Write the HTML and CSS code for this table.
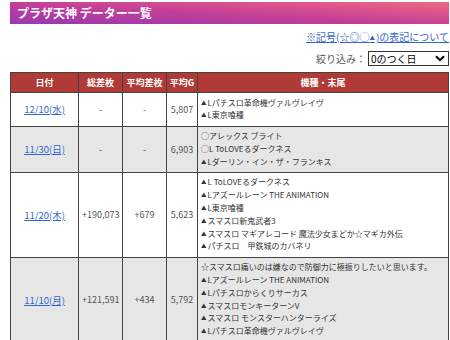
FILE: index.html
```html
<!DOCTYPE html>
<html lang="ja">
<head>
<meta charset="utf-8">
<link rel="stylesheet" href="styles.css">
</head>
<body>
<div class="page">
  <h1 class="title">プラザ天神 データー一覧</h1>
  <div class="note"><a href="#">※記号(☆◎◯<span class="tri">▲</span>)の表記について</a></div>
  <div class="filter">
    <span class="filter-label">絞り込み：</span>
    <div class="select-wrap">
      <select class="filter-select"><option>0のつく日</option></select>
      <svg class="chev" width="10" height="7" viewBox="0 0 10 7"><path d="M1 1.2 L5 5.2 L9 1.2" fill="none" stroke="#000" stroke-width="2"/></svg>
    </div>
  </div>
  <table class="data">
    <colgroup>
      <col class="c-date"><col class="c-total"><col class="c-avg"><col class="c-g"><col class="c-model">
    </colgroup>
    <thead>
      <tr><th>日付</th><th>総差枚</th><th>平均差枚</th><th>平均G</th><th>機種・末尾</th></tr>
    </thead>
    <tbody>
      <tr>
        <td class="date"><a href="#">12/10(水)</a></td>
        <td class="num">-</td><td class="num">-</td><td class="num">5,807</td>
        <td class="models"><div><span class="tri">▲</span>Lパチスロ革命機ヴァルヴレイヴ</div><div><span class="tri">▲</span>L東京喰種</div></td>
      </tr>
      <tr class="alt">
        <td class="date"><a href="#">11/30(日)</a></td>
        <td class="num">-</td><td class="num">-</td><td class="num">6,903</td>
        <td class="models"><div>◯アレックス ブライト</div><div>◯L ToLOVEるダークネス</div><div><span class="tri">▲</span>Lダーリン・イン・ザ・フランキス</div></td>
      </tr>
      <tr>
        <td class="date"><a href="#">11/20(木)</a></td>
        <td class="num">+190,073</td><td class="num">+679</td><td class="num">5,623</td>
        <td class="models"><div><span class="tri">▲</span>L ToLOVEるダークネス</div><div><span class="tri">▲</span>Lアズールレーン THE ANIMATION</div><div><span class="tri">▲</span>L東京喰種</div><div><span class="tri">▲</span>スマスロ新鬼武者3</div><div><span class="tri">▲</span>スマスロ マギアレコード 魔法少女まどか☆マギカ外伝</div><div><span class="tri">▲</span>パチスロ　甲鉄城のカバネリ</div></td>
      </tr>
      <tr class="alt">
        <td class="date"><a href="#">11/10(月)</a></td>
        <td class="num">+121,591</td><td class="num">+434</td><td class="num">5,792</td>
        <td class="models"><div>☆スマスロ痛いのは嫌なので防御力に極振りしたいと思います。</div><div><span class="tri">▲</span>Lアズールレーン THE ANIMATION</div><div><span class="tri">▲</span>Lパチスロからくりサーカス</div><div><span class="tri">▲</span>スマスロモンキーターンV</div><div><span class="tri">▲</span>スマスロ モンスターハンターライズ</div><div><span class="tri">▲</span>Lパチスロ革命機ヴァルヴレイヴ</div></td>
      </tr>
    </tbody>
  </table>
</div>
</body>
</html>
```
FILE: styles.css
```css
html, body {
  margin: 0;
  padding: 0;
  background: #ffffff;
}
body {
  font-family: "Noto Sans CJK JP", "Noto Sans", sans-serif;
  color: #333333;
}
.page {
  width: 439px;
  padding: 2px 0 0 10px;
}
.title {
  margin: 0;
  height: 22px;
  line-height: 22px;
  padding-left: 7px;
  font-size: 12px;
  font-weight: bold;
  color: #ffffff;
  background: linear-gradient(to top right, #9838b2 0%, #c23e98 45%, #e0588a 80%, #ec6c7c 100%);
}
.tri {
  font-size: 5.5px;
  vertical-align: 1px;
  margin-right: 1px;
}
.note {
  margin-top: 6px;
  text-align: right;
  font-size: 10px;
  line-height: 14px;
}
.note a {
  color: #3366cc;
}
.filter {
  margin-top: 6px;
  display: flex;
  justify-content: flex-end;
  align-items: center;
  gap: 2px;
  height: 15px;
}
.filter-label {
  font-size: 10px;
  line-height: 15px;
  color: #555555;
}
.select-wrap {
  position: relative;
  width: 81px;
  height: 15px;
}
.filter-select {
  appearance: none;
  -webkit-appearance: none;
  display: block;
  box-sizing: border-box;
  margin: 0;
  width: 81px;
  height: 15px;
  font-family: inherit;
  font-size: 10px;
  line-height: 13px;
  padding: 0 2px;
  border: 1px solid #333333;
  border-radius: 0;
  background: #ffffff;
  color: #000000;
}
.chev {
  position: absolute;
  z-index: 1;
  right: 4px;
  top: 4px;
  pointer-events: none;
}
.data {
  margin-top: 6px;
  width: 439px;
  table-layout: fixed;
  border-collapse: collapse;
  font-size: 9px;
}
.c-date { width: 68px; }
.c-total { width: 44px; }
.c-avg { width: 44px; }
.c-g { width: 31px; }
.data th {
  background: #b03a36;
  color: #ffffff;
  font-weight: bold;
  height: 19px;
  padding: 0;
  border: 1px solid #444444;
  font-size: 9px;
}
.data td {
  border: 1px solid #444444;
  padding: 3.5px 3px;
  vertical-align: middle;
}
.data tr.alt td {
  background: #e6e6e6;
}
.date {
  text-align: center;
}
.date a {
  color: #3366cc;
  font-size: 9.5px;
}
.num {
  text-align: center;
  color: #555555;
}
.models {
  font-size: 8px;
  color: #333333;
}
.models div {
  height: 12.8px;
  line-height: 12.8px;
  white-space: nowrap;
}
```
